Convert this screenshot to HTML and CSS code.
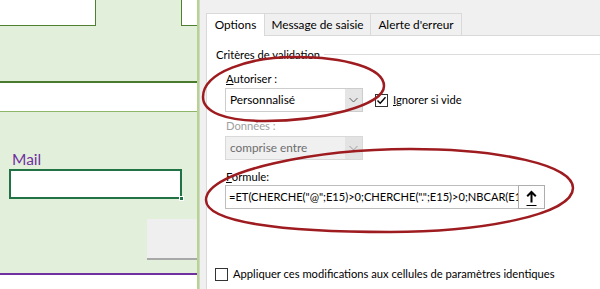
FILE: index.html
```html
<!DOCTYPE html>
<html lang="fr">

<head>
  <meta charset="UTF-8">
  <meta name="viewport" content="width=device-width, initial-scale=1.0">
  <title>Validation des données</title>
  <link rel="stylesheet" href="styles.css">
</head>

<body>
  <div class="screen">

    <!-- feuille Excel en arrière-plan -->
    <div class="sheet">
      <div class="row row-top">
        <div class="cell cell-a"></div>
        <div class="cell-fill"></div>
        <div class="cell cell-b"></div>
      </div>
      <div class="row row-band"></div>
      <div class="row row-blank"></div>
      <div class="row row-form">
        <div class="mail-label">Mail</div>
        <div class="mail-input"><span class="fill-handle"></span></div>
        <div class="grey-btn"></div>
      </div>
      <div class="row row-bottom"></div>
    </div>

    <!-- boîte de dialogue -->
    <div class="dialog">
      <div class="tabs">
        <div class="tab tab-options active">Options</div>
        <div class="tab tab-message">Message de saisie</div>
        <div class="tab tab-alert">Alerte d'erreur</div>
      </div>

      <div class="panel">
        <div class="group-title"><span>Critères de validation</span></div>

        <div class="field-label"><u>A</u>utoriser :</div>
        <div class="field-row">
          <div class="combo">
            <span class="combo-text">Personnalisé</span>
            <span class="combo-arrow">
              <svg width="9" height="6" viewBox="0 0 9 6"><path d="M0.5 1 L4.5 5 L8.5 1" fill="none" stroke="#606060" stroke-width="1"/></svg>
            </span>
          </div>
          <div class="check ignore">
            <span class="box">
              <svg width="11" height="11" viewBox="0 0 11 11"><path d="M1.5 5.5 L4.2 8.2 L9.5 2.2" fill="none" stroke="#000" stroke-width="1.4"/></svg>
            </span>
            <span><u>I</u>gnorer si vide</span>
          </div>
        </div>

        <div class="field-label disabled">Données :</div>
        <div class="combo combo-disabled">
          <span class="combo-text">comprise entre</span>
          <span class="combo-arrow">
            <svg width="9" height="6" viewBox="0 0 9 6"><path d="M0.5 1 L4.5 5 L8.5 1" fill="none" stroke="#a0a0a0" stroke-width="1"/></svg>
          </span>
        </div>

        <div class="field-label"><u>F</u>ormule:</div>
        <div class="formula">
          <div class="formula-text">=ET(CHERCHE("@";E15)&gt;0;CHERCHE(".";E15)&gt;0;NBCAR(E15)&gt;5)</div>
          <div class="ref-btn">
            <svg width="25" height="22" viewBox="0 0 25 22">
              <path d="M12.5 6 V16.5 M8.2 10.3 L12.5 6 L16.8 10.3" fill="none" stroke="#000" stroke-width="2"/>
              <path d="M7.5 19.5 H17.5" stroke="#000" stroke-width="1"/>
            </svg>
          </div>
        </div>

        <div class="check apply">
          <span class="box"></span>
          <span>Appliquer ces modifications aux cellules de paramètres identiques</span>
        </div>
      </div>
    </div>

    <!-- annotations entourées à la main -->
    <svg class="marks" width="600" height="289" viewBox="0 0 600 289">
      <path d="M203 97 C203 72 250 57 295 57 C345 57 384 68 384 86 C384 106 320 121 265 121 C225 121 203 112 203 97 Z" />
      <path d="M206 200 C206 170 320 149 410 149 C500 149 573 165 573 188 C573 215 480 232 390 232 C280 232 206 222 206 200 Z" />
    </svg>

  </div>
</body>

</html>
```

FILE: styles.css
```css
* {
  box-sizing: border-box;
}

body {
  margin: 0;
  background: #fff;
}

.screen {
  position: relative;
  display: flex;
  width: 600px;
  height: 289px;
  overflow: hidden;
  font-family: Lato, 'Noto Sans', sans-serif;
  font-size: 11.2px;
  color: #000;
}

/* feuille */

.sheet {
  width: 199px;
  display: flex;
  flex-direction: column;
  border-right: 2px solid #b5d58a;
}

.row-top {
  display: flex;
  height: 26px;
  background: #e2efda;
}

.cell {
  background: #fff;
  border-bottom: 1px solid #507e32;
}

.cell-a {
  width: 96px;
  border-right: 1px solid #507e32;
}

.cell-fill {
  flex: 1;
}

.cell-b {
  width: 16px;
  border-left: 1px solid #507e32;
}

.row-band {
  height: 57px;
  background: #e2efda;
  border-bottom: 2px solid #4a7a2e;
}

.row-blank {
  height: 29px;
  background: #fff;
  border-bottom: 1px solid #8fb56b;
}

.row-form {
  height: 161px;
  display: flex;
  flex-direction: column;
  padding-top: 38px;
  background: #e2efda;
}

.mail-label {
  padding-left: 12px;
  font-size: 15.5px;
  line-height: 19px;
  color: #7030a0;
}

.mail-input {
  position: relative;
  width: 173px;
  height: 30px;
  margin-left: 9px;
  background: #fff;
  border: 2px solid #217346;
}

.fill-handle {
  position: absolute;
  right: -4px;
  bottom: -4px;
  width: 5px;
  height: 5px;
  background: #217346;
  border: 1px solid #fff;
}

.grey-btn {
  align-self: flex-end;
  width: 50px;
  height: 41px;
  margin-top: 20px;
  background: #efefef;
  border-bottom: 2px solid #a8a8a8;
}

.row-bottom {
  flex: 1;
  background: #fff;
  border-top: 2px solid #7030a0;
}

/* dialogue */

.dialog {
  flex: 1;
  display: flex;
  flex-direction: column;
  padding: 13px 0 0 6px;
  background: #f0f0f0;
  border-left: 1px solid #d4d4d4;
}

.tabs {
  display: flex;
  height: 22px;
}

.tab {
  height: 23px;
  margin-right: -1px;
  border: 1px solid #d9d9d9;
  border-bottom: none;
  font-size: 11.8px;
  line-height: 21px;
  text-align: center;
  background: #f0f0f0;
}

.tab-options {
  width: 59px;
}

.tab-message {
  width: 107px;
}

.tab-alert {
  width: 92px;
}

.tab.active {
  position: relative;
  z-index: 1;
  background: #fff;
}

.panel {
  flex: 1;
  padding: 10px 0 0 9px;
  background: #fff;
  border: 1px solid #d9d9d9;
  border-right: none;
  border-bottom: none;
}

.group-title {
  display: flex;
  align-items: center;
  height: 16px;
}

.group-title::after {
  content: "";
  flex: 1;
  margin-left: 4px;
  border-top: 1px solid #dcdcdc;
}

.field-label {
  margin: 9px 0 0 10px;
  line-height: 16px;
}

.field-label.disabled {
  margin-top: 6px;
  color: #a0a0a0;
}

.field-row {
  display: flex;
  align-items: center;
  margin: 1px 0 0 9px;
}

.combo {
  display: flex;
  width: 138px;
  height: 24px;
  background: #fff;
  border: 1px solid #cdcdcd;
  font-size: 11.8px;
}

.combo-text {
  flex: 1;
  padding-left: 4px;
  line-height: 22px;
}

.combo-arrow {
  display: flex;
  align-items: center;
  justify-content: center;
  width: 17px;
  background: #e5e5e5;
}

.combo-disabled {
  margin: 2px 0 0 9px;
  background: #f0f0f0;
  border-color: #d9d9d9;
  color: #6d6d6d;
}

.combo-disabled .combo-arrow {
  background: #e3e3e3;
}

.check {
  display: flex;
  align-items: center;
  gap: 5px;
  line-height: 16px;
  white-space: nowrap;
}

.box {
  display: flex;
  align-items: center;
  justify-content: center;
  width: 13px;
  height: 13px;
  background: #fff;
  border: 1px solid #333;
}

.ignore {
  margin-left: 12px;
}

.formula {
  display: flex;
  width: 320px;
  height: 24px;
  margin-left: 9px;
}

.formula-text {
  flex: 1;
  padding-left: 3px;
  font-size: 11.1px;
  line-height: 22px;
  white-space: nowrap;
  overflow: hidden;
  background: #fff;
  border: 1px solid #bdbdbd;
}

.ref-btn {
  width: 27px;
  margin-left: -1px;
  background: #fdfdfd;
  border: 1px solid #adadad;
}

.apply {
  margin: 57px 0 0 -1px;
}

/* annotations */

.marks {
  position: absolute;
  top: 0;
  left: 0;
  pointer-events: none;
}

.marks path {
  fill: none;
  stroke: #9e1b1f;
  stroke-width: 2.5;
}
```
